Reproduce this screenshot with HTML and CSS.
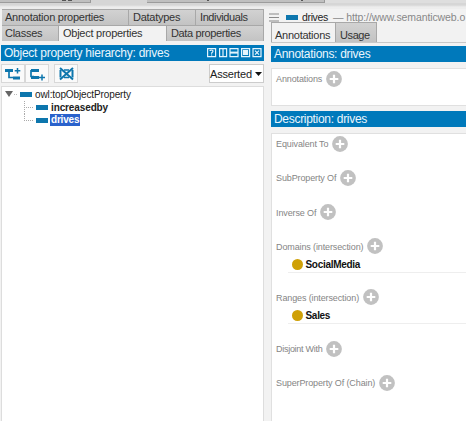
FILE: index.html
```html
<!DOCTYPE html>
<html lang="en">
<head>
<meta charset="utf-8">
<title>Object properties</title>
<link rel="stylesheet" href="styles.css">
</head>
<body>
<svg width="0" height="0" class="defs">
  <symbol id="plus" viewBox="0 0 16 16"><circle cx="8" cy="8" r="7.900" fill="#c1c1c1"/><path d="M8 3.700v8.600M3.700 8h8.600" stroke="#fff" stroke-width="2.200"/></symbol>
</svg>
<div class="app">
  <div class="topstrip"><div class="top t1"><i class="tail"></i><i class="tail"></i></div><div class="top t2"></div><div class="top t3"><i class="tail"></i><i class="tail far"></i></div><div class="top t4"></div></div>
  <div class="main">
    <section class="left">
      <div class="tabs">
        <div class="tab w1"><span>Annotation properties</span></div><div class="tab w2"><span>Datatypes</span></div><div class="tab w3"><span class="s3">Individuals</span></div>
      </div>
      <div class="tabs">
        <div class="tab v1"><span>Classes</span></div><div class="tab v2 active"><span>Object properties</span></div><div class="tab v3"><span class="s6">Data properties</span></div>
      </div>
      <div class="bar leftbar"><span>Object property hierarchy: drives</span>
        <svg class="winicons" width="55" height="10" viewBox="0 0 55 10" fill="none" stroke="#e4f4fd" stroke-width="1.200">
          <path d="M.6.6h8v8h-8zM12.600.6h7v8h-7zM16 1v8M23 .6h8v8h-8zM34.600.6h8v8h-8zM46 .6h8v8h-8z"/>
          <path d="M23 4.600h8" stroke-width="2"/><path d="M36.500 2.500h4v4h-4z" fill="#e4f4fd"/>
          <path d="M48 2.600l4 4m0-4l-4 4M3 3q0-1 1.500-1T6 3q0 1-1.400 2v.7M4.600 6.500v1"/>
        </svg>
      </div>
      <div class="toolbar">
        <div class="tool"><svg width="22" height="17" viewBox="0 0 22 17" fill="none" stroke="#0d76ad"><path d="M3 5.500h8" stroke-width="3"/><path d="M7 6v6.500h4" stroke-width="1.700"/><path d="M11 13h7" stroke-width="3"/><path d="M15.500 3v5.500M12.700 5.700h5.600" stroke-width="1.500"/></svg></div>
        <div class="tool"><svg width="22" height="17" viewBox="0 0 22 17" fill="none" stroke="#0d76ad"><path d="M5 5.500h8" stroke-width="3"/><path d="M5 5v6.500h3" stroke-width="1.700"/><path d="M5 12.500h8" stroke-width="3"/><path d="M16 9.500v6M13 12.500h6" stroke-width="1.500"/></svg></div>
        <div class="tool c"><svg width="22" height="17" viewBox="0 0 22 17" fill="none" stroke="#0d76ad"><path d="M5.500 5v7.500M17.500 5v7.500" stroke-width="2"/><path d="M9 5h5M9 12.500h5" stroke-width="1.600"/><path d="M5 3L18 14.500M18 3L5 14.500" stroke-width="2"/></svg></div>
        <div class="select"><span>Asserted</span><svg width="7" height="4"><path d="M0 0h7L3.500 4z" fill="#111"/></svg></div>
      </div>
      <div class="tree">
        <div class="node root"><svg width="16" height="11"><path d="M0 2h8L4 8z" fill="#666"/><path d="M9 5.500h4" stroke="#bbb" stroke-dasharray="1 1"/></svg><i class="prop"></i><span>owl:topObjectProperty</span></div>
        <div class="node child"><i class="branch"></i><i class="prop"></i><b>increasedby</b></div>
        <div class="node child last"><i class="branch"></i><i class="prop"></i><b class="sel">drives</b></div>
      </div>
    </section>
    <section class="right">
      <div class="path"><svg width="10" height="9"><path d="M0 1h10M0 4.500h10M0 8h10" stroke="#8a8a8a" stroke-width="1.200"/></svg><i class="prop"></i><span class="name">drives</span><span class="uri">— http://www.semanticweb.o</span></div>
      <div class="tabs rt"><div class="tab r1 active"><span>Annotations</span></div><div class="tab r2"><span class="s15">Usage</span></div></div>
      <div class="bar"><span>Annotations: drives</span></div>
      <div class="panel ann"><div class="slot"><span>Annotations</span><svg width="16" height="16"><use href="#plus"/></svg></div></div>
      <div class="bar"><span>Description: drives</span></div>
      <div class="panel desc">
        <div class="slot"><span>Equivalent To</span><svg width="16" height="16"><use href="#plus"/></svg></div>
        <div class="slot"><span>SubProperty Of</span><svg width="16" height="16"><use href="#plus"/></svg></div>
        <div class="slot"><span>Inverse Of</span><svg width="16" height="16"><use href="#plus"/></svg></div>
        <div class="slot has"><span>Domains (intersection)</span><svg width="16" height="16"><use href="#plus"/></svg></div>
        <div class="entry"><i class="dot"></i><b>SocialMedia</b></div>
        <div class="slot has"><span>Ranges (intersection)</span><svg width="16" height="16"><use href="#plus"/></svg></div>
        <div class="entry"><i class="dot"></i><b>Sales</b></div>
        <div class="slot"><span class="s26">Disjoint With</span><svg width="16" height="16"><use href="#plus"/></svg></div>
        <div class="slot"><span>SuperProperty Of (Chain)</span><svg width="16" height="16"><use href="#plus"/></svg></div>
      </div>
    </section>
  </div>
</div>
</body>
</html>
```
FILE: styles.css
```css
* { box-sizing: border-box; }
body { margin: 0; background: #f2f2f2; font: 12px "Liberation Sans", Arial, sans-serif; color: #333; overflow: hidden; }
.defs { position: absolute; }
.app { width: 466px; height: 421px; display: flex; flex-direction: column; overflow: hidden; }
span, b { white-space: nowrap; }
svg, i { flex: none; display: block; }
.topstrip { height: 9px; display: flex; flex: none; background: linear-gradient(#d6d6d6 5px, #ededed 7px); }
.top { height: 3px; background: #c0c0c0; border-bottom: 1px solid #9c9c9c; display: flex; }
.tail { width: 4px; height: 1px; background: #555; margin-left: 2px; }
.t1 { width: 91px; border-right: 1px solid #999; padding-left: 60px; }
.t2 { width: 56px; background: #d6d6d6; border: 0; }
.t3 { width: 178px; border-right: 1px solid #999; padding-left: 58px; }
.t3 .tail { width: 2px; }
.t3 .far { margin-left: 92px; }
.t4 { flex: 1; background: #dedede; border: 0; }
.main { display: flex; flex: 1; min-height: 0; }
.left { width: 264px; padding-left: 1px; display: flex; flex-direction: column; flex: none; }
.right { flex: 1; min-width: 0; margin-left: 7px; display: flex; flex-direction: column; }
.tabs { display: flex; height: 16px; flex: none; }
.left .tabs { margin-left: 1px; }
.tab { background: linear-gradient(#d2d2d2, #c3c3c3); border: 1px solid #a8a8a8; border-width: 1px 1px 0 0; padding-left: 3px; line-height: 15px; height: 100%; font-size: 11px; letter-spacing: -.26px; }
.tab.active { background: #f2f2f2; }
.w1 { width: 127px; }
.w2 { width: 67px; padding-left: 4px; }
.w3 { width: 68px; padding-left: 4px; }
.v1 { width: 57px; }
.v2 { width: 108px; padding-left: 4px; }
.v3 { width: 97px; padding-left: 4px; }
.s3, .s15 { letter-spacing: -.4px; }
.s6 { letter-spacing: -.36px; }
.bar { background: #0079bb; color: #eaf6fd; height: 16px; line-height: 16px; padding-left: 3px; flex: none; display: flex; align-items: center; justify-content: space-between; letter-spacing: -.3px; }
.leftbar { margin-top: 4px; padding-right: 2px; letter-spacing: -.25px; }
.toolbar { height: 25px; padding-top: 3px; display: flex; flex: none; }
.tool { height: 19px; width: 24px; background: #fafafa; border: 1px solid #d8d8d8; }
.c { margin-left: 5px; }
.select { margin-left: auto; width: 55px; height: 19px; background: #fff; border: 1px solid #ccc; display: flex; align-items: center; justify-content: space-between; padding-right: 1px; font-size: 11px; letter-spacing: -.2px; color: #222; }
.tree { flex: 1; background: #fff; border: 1px solid #ddd; border-bottom: 0; padding-top: 1.500px; }
.node { display: flex; height: 12.700px; align-items: center; color: #222; line-height: 12px; font-size: 10px; letter-spacing: -.12px; }
.root { padding-left: 3px; }
.prop { width: 12px; height: 5px; background: #0d76ad; margin-right: 3px; }
.root .prop { margin-left: -1px; }
.child { padding-left: 22px; }
.branch { width: 12px; height: 13px; background: repeating-linear-gradient(90deg, #aaa 0 1px, #fff 1px 2px) 0 6px / 9px 1px no-repeat, repeating-linear-gradient(#aaa 0 1px, #fff 1px 2px) 0 0 / 1px 13px no-repeat; }
.last .branch { background: repeating-linear-gradient(90deg, #aaa 0 1px, #fff 1px 2px) 0 6px / 9px 1px no-repeat, repeating-linear-gradient(#aaa 0 1px, #fff 1px 2px) 0 0 / 1px 6px no-repeat; }
.sel { background: #2a62cc; color: #fff; height: 12px; width: 30px; margin-left: -1px; padding-left: 1px; letter-spacing: -.2px; }
.path { height: 13px; padding-top: 3px; display: flex; align-items: center; flex: none; margin-left: -2px; font-size: 10.500px; }
.path .prop { margin: 0 4px 0 7px; }
.name { color: #222; margin-right: 5px; letter-spacing: -.35px; }
.uri { color: #888; letter-spacing: -.1px; }
.rt { box-shadow: inset 0 -1px #c8c8c8; margin-bottom: 3px; height: 21px; }
.rt .tab { height: 20px; line-height: 24px; border-left: 1px solid #aaa; }
.r1 { width: 65px; }
.rt .r2 { width: 41px; border-left: 0; padding-left: 4px; }
.panel { background: #fff; border: 1px solid #e0e0e0; border-width: 1px 0 1px 1px; padding-left: 4px; margin-top: 6px; }
.ann { height: 38px; margin-bottom: 5px; }
.desc { flex: 1; border-bottom: 0; }
.slot { height: 34.300px; display: flex; color: #858585; font-size: 9px; line-height: 21px; gap: 4px; letter-spacing: -.12px; }
.slot svg { margin-top: 1.500px; }
.slot.has { height: 18px; }
.s26 { letter-spacing: -.28px; }
.entry { height: 33.100px; margin-left: 12px; font-size: 10px; letter-spacing: -.3px; color: #111; display: flex; align-items: flex-start; line-height: 19px; gap: 3px; background: linear-gradient(#eee, #eee) 0 17px / 100% 1px no-repeat; }
.dot { width: 11px; height: 11px; border-radius: 50%; background: #cfa006; margin: 4px 0 0 3.500px; }
```
